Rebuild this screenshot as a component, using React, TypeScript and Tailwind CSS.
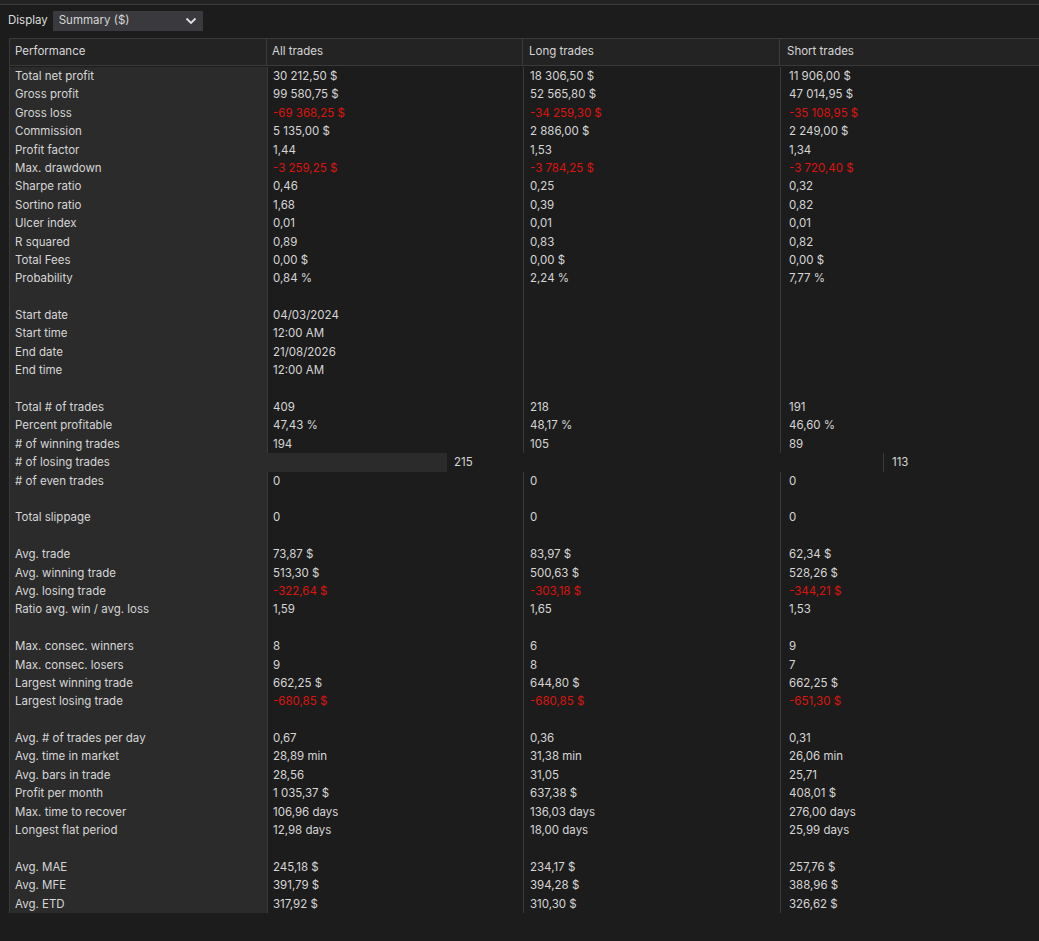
const R = "r:";
type Row = [string, string, string, string] | null;
const rows: Row[] = [
  ["Total net profit", "30 212,50 $", "18 306,50 $", "11 906,00 $"],
  ["Gross profit", "99 580,75 $", "52 565,80 $", "47 014,95 $"],
  ["Gross loss", R + "-69 368,25 $", R + "-34 259,30 $", R + "-35 108,95 $"],
  ["Commission", "5 135,00 $", "2 886,00 $", "2 249,00 $"],
  ["Profit factor", "1,44", "1,53", "1,34"],
  ["Max. drawdown", R + "-3 259,25 $", R + "-3 784,25 $", R + "-3 720,40 $"],
  ["Sharpe ratio", "0,46", "0,25", "0,32"],
  ["Sortino ratio", "1,68", "0,39", "0,82"],
  ["Ulcer index", "0,01", "0,01", "0,01"],
  ["R squared", "0,89", "0,83", "0,82"],
  ["Total Fees", "0,00 $", "0,00 $", "0,00 $"],
  ["Probability", "0,84 %", "2,24 %", "7,77 %"],
  null,
  ["Start date", "04/03/2024", "", ""],
  ["Start time", "12:00 AM", "", ""],
  ["End date", "21/08/2026", "", ""],
  ["End time", "12:00 AM", "", ""],
  null,
  ["Total # of trades", "409", "218", "191"],
  ["Percent profitable", "47,43 %", "48,17 %", "46,60 %"],
  ["# of winning trades", "194", "105", "89"],
  ["LOSING", "", "", ""],
  ["# of even trades", "0", "0", "0"],
  null,
  ["Total slippage", "0", "0", "0"],
  null,
  ["Avg. trade", "73,87 $", "83,97 $", "62,34 $"],
  ["Avg. winning trade", "513,30 $", "500,63 $", "528,26 $"],
  ["Avg. losing trade", R + "-322,64 $", R + "-303,18 $", R + "-344,21 $"],
  ["Ratio avg. win / avg. loss", "1,59", "1,65", "1,53"],
  null,
  ["Max. consec. winners", "8", "6", "9"],
  ["Max. consec. losers", "9", "8", "7"],
  ["Largest winning trade", "662,25 $", "644,80 $", "662,25 $"],
  ["Largest losing trade", R + "-680,85 $", R + "-680,85 $", R + "-651,30 $"],
  null,
  ["Avg. # of trades per day", "0,67", "0,36", "0,31"],
  ["Avg. time in market", "28,89 min", "31,38 min", "26,06 min"],
  ["Avg. bars in trade", "28,56", "31,05", "25,71"],
  ["Profit per month", "1 035,37 $", "637,38 $", "408,01 $"],
  ["Max. time to recover", "106,96 days", "136,03 days", "276,00 days"],
  ["Longest flat period", "12,98 days", "18,00 days", "25,99 days"],
  null,
  ["Avg. MAE", "245,18 $", "234,17 $", "257,76 $"],
  ["Avg. MFE", "391,79 $", "394,28 $", "388,96 $"],
  ["Avg. ETD", "317,92 $", "310,30 $", "326,62 $"],
];

function Val({ v }: { v: string }) {
  const red = v.startsWith(R);
  return <span className={red ? "text-[#dc140e]" : ""}>{red ? v.slice(2) : v}</span>;
}

export default function App() {
  return (
    <div className="w-[1039px] h-[941px] bg-[#1c1c1c] text-[#d6d6d6] text-[11.5px] overflow-hidden" style={{ fontFamily: "Inter, 'Noto Sans', sans-serif" }}>
      <div className="h-[5px] bg-[#232323] border-b border-[#3a3a3a]" />
      <div className="flex items-center h-[28px] mt-[2px] pl-[8px] gap-[5px]">
        <span className="text-[#dcdcdc]">Display</span>
        <div className="w-[150px] h-[20px] bg-[#3a3a3e] flex items-center justify-between px-[6px]">
          <span>Summary ($)</span>
          <svg width="12" height="8" viewBox="0 0 12 8"><path d="M1.5 1.5 L6 6 L10.5 1.5" stroke="#e0e0e0" strokeWidth="1.8" fill="none" /></svg>
        </div>
      </div>
      <div className="ml-[9px] mt-[3px] w-[1030px] border-l border-t border-[#3a3a3a]">
        <div className="flex h-[27px] bg-[#232323] border-b border-[#3a3a3a] mb-[1px]">
          <div className="w-[257px] pl-[5px] flex items-center border-r border-[#3a3a3a]">Performance</div>
          <div className="w-[256px] pl-[5px] flex items-center border-r border-[#3a3a3a]">All trades</div>
          <div className="w-[257px] pl-[6px] flex items-center border-r border-[#3a3a3a]">Long trades</div>
          <div className="flex-1 pl-[7px] flex items-center">Short trades</div>
        </div>
        {rows.map((r, i) => {
          if (r && r[0] === "LOSING") {
            return (
              <div key={i} className="flex h-[18.4px] leading-[18.4px]">
                <div className="w-[257px] pl-[5px] bg-[#2b2b2b]"># of losing trades</div>
                <div className="w-[180px] bg-[#2b2b2b]" />
                <div className="w-[436px] pl-[7px]">215</div>
                <div className="pl-[8px] border-l border-[#3a3a3a]">113</div>
              </div>
            );
          }
          return (
            <div key={i} className="flex h-[18.4px] leading-[18.4px]">
              <div className="w-[257px] pl-[5px] bg-[#2b2b2b] whitespace-nowrap">{r ? r[0] : ""}</div>
              <div className="w-[256px] pl-[5px] border-l border-[#3a3a3a]">{r && <Val v={r[1]} />}</div>
              <div className="w-[257px] pl-[6px] border-l border-[#3a3a3a]">{r && <Val v={r[2]} />}</div>
              <div className="flex-1 pl-[8px] border-l border-[#3a3a3a]">{r && <Val v={r[3]} />}</div>
            </div>
          );
        })}
      </div>
    </div>
  );
}
